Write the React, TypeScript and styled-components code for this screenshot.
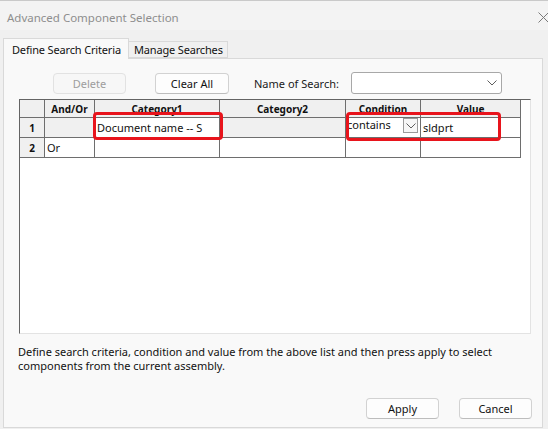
import React from "react";
import styled, { createGlobalStyle } from "styled-components";

const GlobalStyle = createGlobalStyle`
  html, body {
    margin: 0;
    padding: 0;
    background: #f0f0f0;
  }
  body {
    font-family: "Noto Sans", "Open Sans", sans-serif;
    font-size: 11px;
    color: #1a1a1a;
  }
  * { box-sizing: border-box; }
`;

const Window = styled.div`
  width: 548px;
  height: 429px;
  display: flex;
  flex-direction: column;
  background: #f0f0f0;
  overflow: hidden;
`;

const TitleBar = styled.div`
  height: 30px;
  flex: none;
  display: flex;
  align-items: center;
  justify-content: space-between;
  padding: 0 0 0 7px;
  background: #f3f3f3;
  border-top: 1px solid #c9c9c9;
`;

const Title = styled.span`
  font-size: 11.5px;
  color: #8e8e8e;
  margin-top: 3px;
`;

const CloseGlyph = styled.svg`
  width: 11px;
  height: 11px;
  margin-right: -1px;
  margin-top: 3px;
  stroke: #7a7a7a;
  stroke-width: 1;
`;

const TabRow = styled.div`
  height: 28px;
  flex: none;
  display: flex;
  align-items: flex-end;
  padding-left: 3px;
  position: relative;
  z-index: 1;
`;

const Tab = styled.div<{ $active?: boolean }>`
  height: ${(p) => (p.$active ? "21px" : "17px")};
  margin-bottom: ${(p) => (p.$active ? "-1px" : "0")};
  padding: ${(p) => (p.$active ? "0 7px 0 8px" : "0 4px 0 5px")};
  display: flex;
  align-items: center;
  background: ${(p) => (p.$active ? "#f9f9f9" : "#f0f0f0")};
  border: 1px solid #d9d9d9;
  border-bottom: ${(p) => (p.$active ? "none" : "1px solid #d9d9d9")};
  border-left: ${(p) => (p.$active ? "1px solid #d9d9d9" : "none")};
  color: #111;
  letter-spacing: -0.16px;
  white-space: nowrap;
`;

const Panel = styled.div`
  height: 370px;
  flex: none;
  margin: 0 5px 0 3px;
  background: #f9f9f9;
  border: 1px solid #d9d9d9;
  display: flex;
  flex-direction: column;
`;

const Toolbar = styled.div`
  display: flex;
  align-items: center;
  margin-top: 13px;
  padding-left: 49px;
`;

const PushButton = styled.button<{ $w: number; $gap?: number }>`
  width: ${(p) => p.$w}px;
  height: 21px;
  margin-right: ${(p) => p.$gap ?? 0}px;
  padding: 0;
  font-family: inherit;
  font-size: 11px;
  color: #111;
  background: #fdfdfd;
  border: 1px solid #d2d2d2;
  border-bottom-color: #bdbdbd;
  border-radius: 4px;

  &:disabled {
    color: #9d9d9d;
    background: #f7f7f7;
    border-color: #e2e2e2;
  }
`;

const Label = styled.span`
  margin-left: -4px;
  margin-right: 12px;
  white-space: nowrap;
`;

const Combo = styled.div`
  width: 151px;
  height: 22px;
  display: flex;
  align-items: center;
  justify-content: flex-end;
  padding-right: 4px;
  background: #fff;
  border: 1px solid #a8a8a8;
  border-radius: 3px;
`;

const Chevron = styled.svg`
  width: 10px;
  height: 6px;
  fill: none;
  stroke: #5e5e5e;
  stroke-width: 1;
`;

const GridFrame = styled.div`
  position: relative;
  margin: 5px 0 0 15px;
  width: 512px;
  height: 235px;
  flex: none;
  background: #fff;
  border-left: 1px solid #646464;
  border-top: 1px solid #646464;
  border-right: 1px solid #e3e3e3;
  border-bottom: 1px solid #e3e3e3;
`;

const Table = styled.div`
  display: grid;
  grid-template-columns: 25px 50px 125px 126px 75px 100px 1fr;
  grid-template-rows: 18px 20px 20px;
`;

const Cell = styled.div<{ $gray?: boolean; $head?: boolean; $center?: boolean; $open?: boolean }>`
  display: flex;
  align-items: center;
  justify-content: ${(p) => (p.$center ? "center" : "flex-start")};
  padding-left: ${(p) => (p.$center ? 0 : 2)}px;
  background: ${(p) => (p.$gray ? "#f0f0f0" : "#fff")};
  border-right: ${(p) => (p.$open ? "none" : "1px solid #6e6e6e")};
  border-bottom: ${(p) => (p.$open ? "none" : "1px solid #6e6e6e")};
  font-weight: ${(p) => (p.$head ? 700 : 400)};
  font-size: ${(p) => (p.$head ? "10px" : "11px")};
  color: #111;
  white-space: nowrap;
  overflow: hidden;
`;

const ConditionCell = styled(Cell)`
  align-items: flex-start;
  justify-content: space-between;
  padding: 0 2px 0 1px;
`;

const ConditionText = styled.span`
  line-height: 14px;
`;

const DropBox = styled.div`
  width: 15px;
  height: 15px;
  display: flex;
  align-items: center;
  justify-content: center;
  background: #f6f6f6;
  border: 1px solid #9a9a9a;
`;

const Callout = styled.div<{ $x: number; $y: number; $w: number; $h: number }>`
  position: absolute;
  left: ${(p) => p.$x}px;
  top: ${(p) => p.$y}px;
  width: ${(p) => p.$w}px;
  height: ${(p) => p.$h}px;
  border: 3px solid #e8141c;
  border-radius: 4px;
  pointer-events: none;
`;

const Hint = styled.p`
  margin: 11px 0 0 14px;
  line-height: 14px;
  color: #111;
`;

const Footer = styled.div`
  margin-top: auto;
  margin-bottom: 8px;
  padding-right: 10px;
  display: flex;
  justify-content: flex-end;
  gap: 20px;
`;

const columns = ["And/Or", "Category1", "Category2", "Condition", "Value"];

export default function App() {
  return (
    <>
      <GlobalStyle />
      <Window>
        <TitleBar>
          <Title>Advanced Component Selection</Title>
          <CloseGlyph viewBox="0 0 11 11">
            <line x1="0.5" y1="0.5" x2="10.5" y2="10.5" />
            <line x1="10.5" y1="0.5" x2="0.5" y2="10.5" />
          </CloseGlyph>
        </TitleBar>

        <TabRow>
          <Tab $active>Define Search Criteria</Tab>
          <Tab>Manage Searches</Tab>
        </TabRow>

        <Panel>
          <Toolbar>
            <PushButton $w={73} $gap={29} disabled>
              Delete
            </PushButton>
            <PushButton $w={74} $gap={29}>
              Clear All
            </PushButton>
            <Label>Name of Search:</Label>
            <Combo>
              <Chevron viewBox="0 0 10 6">
                <polyline points="0.5,0.5 5,5 9.5,0.5" />
              </Chevron>
            </Combo>
          </Toolbar>

          <GridFrame>
            <Table>
              <Cell $gray />
              {columns.map((c) => (
                <Cell key={c} $gray $head $center>
                  {c}
                </Cell>
              ))}
              <Cell $open />

              <Cell $gray $head $center>1</Cell>
              <Cell $gray />
              <Cell>Document name -- S</Cell>
              <Cell $gray />
              <ConditionCell>
                <ConditionText>contains</ConditionText>
                <DropBox>
                  <Chevron viewBox="0 0 10 6">
                    <polyline points="0.5,0.5 5,5 9.5,0.5" />
                  </Chevron>
                </DropBox>
              </ConditionCell>
              <Cell>sldprt</Cell>
              <Cell $open />

              <Cell $gray $head $center>2</Cell>
              <Cell>Or</Cell>
              <Cell />
              <Cell />
              <Cell />
              <Cell />
              <Cell $open />
            </Table>

            <Callout $x={73} $y={12} $w={130} $h={28} />
            <Callout $x={326} $y={12} $w={155} $h={29} />
          </GridFrame>

          <Hint>
            Define search criteria, condition and value from the above list and then press apply to select
            <br />
            components from the current assembly.
          </Hint>

          <Footer>
            <PushButton $w={73}>Apply</PushButton>
            <PushButton $w={73}>Cancel</PushButton>
          </Footer>
        </Panel>
      </Window>
    </>
  );
}
